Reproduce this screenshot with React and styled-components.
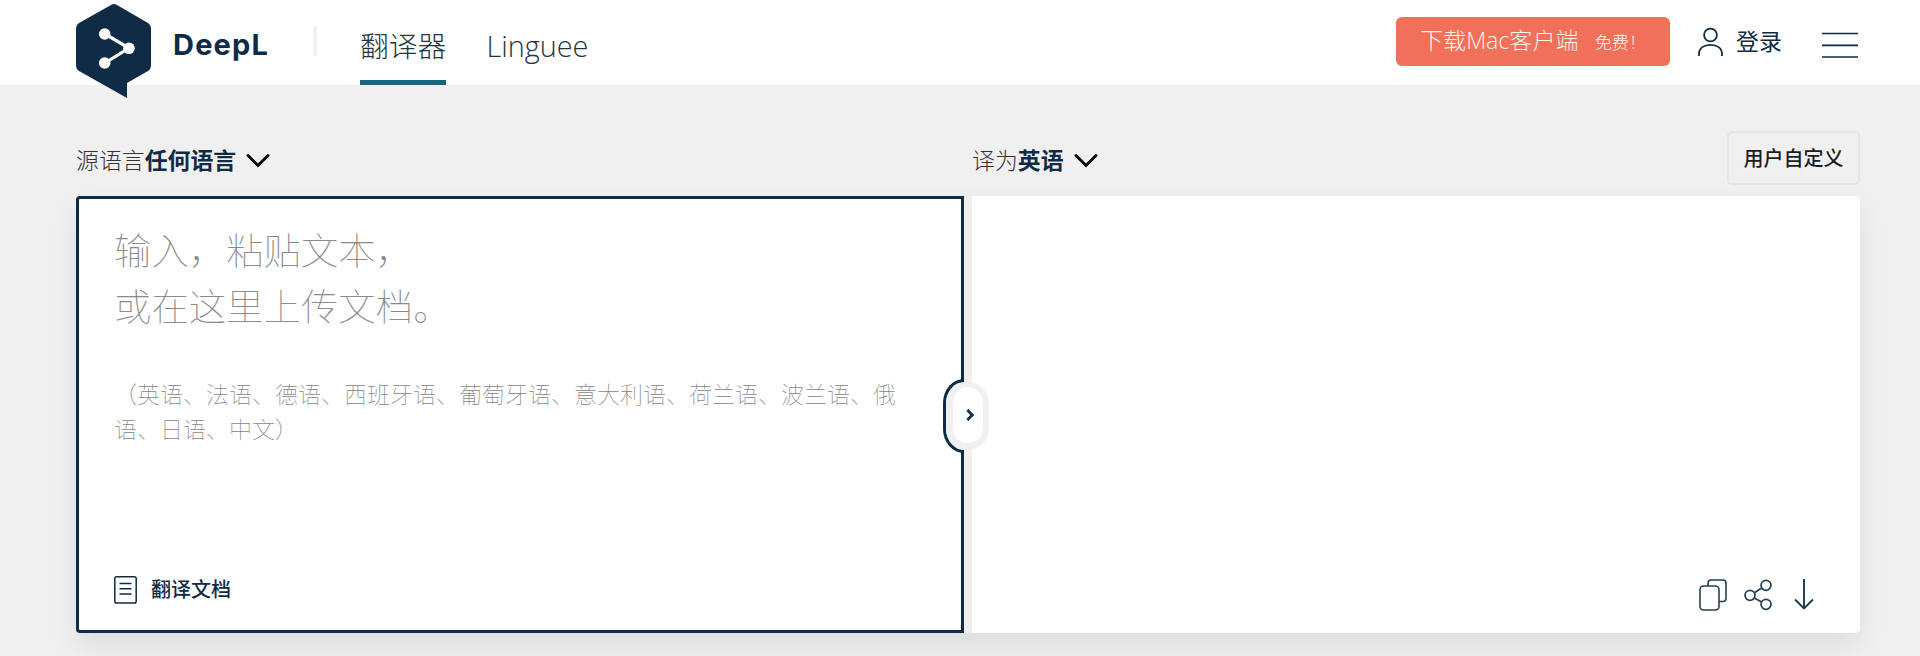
import React from "react";
import styled, { createGlobalStyle } from "styled-components";

const navy = "#0f2b46";
const cjk = '"Open Sans", "Noto Sans CJK SC", sans-serif';

const GlobalStyle = createGlobalStyle`
  * { box-sizing: border-box; }
  body { margin: 0; background: #f0f0f0; font-family: ${cjk}; color: ${navy}; }
  button { font: inherit; color: inherit; background: none; border: 0; padding: 0; }
  svg { display: block; flex: none; }
`;

const Page = styled.div`
  height: 656px;
  overflow: hidden;
  background: #f0f0f0;
`;

const Header = styled.header`
  display: flex;
  height: 85px;
  padding: 0 62px 0 76px;
  background: #fff;
`;

const Brand = styled.a`
  display: flex;
  align-items: flex-start;
  width: 237px;
`;

const Wordmark = styled.span`
  margin: 27px 0 0 21px;
  font: 650 29px/36px Inter, sans-serif;
  letter-spacing: 1.2px;
`;

const Divider = styled.span`
  width: 4px;
  height: 29px;
  margin-top: 27px;
  background: #f2f2f2;
`;

const Nav = styled.nav`
  display: flex;
  gap: 40px;
  margin-left: 43px;
`;

const NavItem = styled.a`
  height: 85px;
  padding-top: 1px;
  border-bottom: 5px solid ${(p) => (p.$active ? "#1b6480" : "transparent")};
  font-size: 28.8px;
  font-weight: 300;
  line-height: 90px;
  color: #24363d;
`;

const Actions = styled.div`
  display: flex;
  align-items: flex-start;
  margin-left: auto;
`;

const Download = styled.button`
  display: flex;
  align-items: baseline;
  gap: 16px;
  width: 274px;
  height: 49px;
  margin: 17px 27px 0 0;
  padding: 0 0 0 24px;
  border-radius: 6px;
  background: #f1705a;
  color: #fff3ed;
  font-size: 23.1px;
  font-weight: 300;
  line-height: 47px;
  white-space: nowrap;
`;

const Free = styled.span`
  font-size: 17.2px;
`;

const Login = styled.a`
  display: flex;
  align-items: center;
  gap: 12px;
  height: 85px;
  width: 125px;
  padding-bottom: 2px;
  font-size: 22.9px;
  line-height: 30px;
`;

const Main = styled.main`
  padding: 46px 60px 0 76px;
`;

const LanguageBar = styled.div`
  display: flex;
  height: 65px;
`;

const Language = styled.button`
  display: flex;
  align-items: center;
  width: ${(p) => p.$width}px;
  height: 56px;
  font-size: 22.9px;
  font-weight: 300;
  color: #333;
  b { font-weight: 700; color: ${navy}; margin-right: 10px; }
  svg { margin-top: 3px; }
`;

const Custom = styled.button`
  width: 133px;
  height: 54px;
  margin-left: auto;
  border: 2px solid #e6e6e6;
  border-radius: 5px;
  padding-bottom: 1px;
  font-size: 20px;
  font-weight: 500;
  color: #1c1c1e;
`;

const Panels = styled.div`
  position: relative;
  display: flex;
  gap: 8px;
  height: 437px;
  border-radius: 5px;
  box-shadow: 0 14px 28px rgba(0, 0, 0, 0.075);
`;

const Source = styled.section`
  display: flex;
  flex-direction: column;
  flex: 0 0 888px;
  padding: 22px 50px 26px 35px;
  border: 3px solid ${navy};
  border-radius: 4px 0 0 4px;
  background: #fff;
`;

const Prompt = styled.p`
  margin: 0;
  font-size: 37.4px;
  font-weight: 100;
  line-height: 56px;
  color: #8a8a8a;
  font-family: "Noto Sans CJK SC", sans-serif;
`;

const Languages = styled.p`
  width: 784px;
  margin: 43px 0 0;
  font: 100 23px/34.5px "Noto Sans CJK SC", sans-serif;
  color: #858585;
`;

const DocumentLink = styled.a`
  display: flex;
  align-items: center;
  gap: 14px;
  margin-top: auto;
  font-size: 20px;
  font-weight: 500;
  line-height: 28px;
`;

const Target = styled.section`
  display: flex;
  flex: 1;
  align-items: flex-end;
  justify-content: flex-end;
  padding: 0 46px 22px 0;
  border-radius: 0 5px 5px 0;
  background: #fff;
`;

const Tool = styled.button`
  margin-left: ${(p) => p.$space}px;
`;

const SwapEdge = styled.span`
  position: absolute;
  left: 867px;
  top: 183px;
  width: 21px;
  height: 74px;
  border: 3px solid ${navy};
  border-right: 0;
  border-radius: 21px 0 0 21px / 24px 0 0 24px;
  background: #f0f0f0;
`;

const Swap = styled.button`
  position: absolute;
  left: 870px;
  top: 186px;
  display: flex;
  align-items: center;
  justify-content: center;
  width: 43px;
  height: 68px;
  padding: 0 0 1px 4px;
  border: 6px solid #f0f0f0;
  border-width: 5px 6px 7px 7px;
  border-radius: 22px;
  background: #fff;
`;

const Logo = () => (
  <svg width="76" height="100" viewBox="0 0 76 100">
    <path
      fill={navy}
      d="M35 5Q38 3 41 5L72 23Q75 25 75 28V66Q75 69 72 71L51 83V98L3 71Q0 69 0 66V28Q0 25 3 23Z"
    />
    <path d="M29 34L53 48L29 63" fill="none" stroke="#fff" strokeWidth="3.2" />
    <g fill="#fff">
      <circle cx="28.7" cy="34" r="5.8" />
      <circle cx="53" cy="48.3" r="5.8" />
      <circle cx="28.7" cy="63" r="5.8" />
    </g>
  </svg>
);

const Chevron = () => (
  <svg width="24" height="16" viewBox="0 0 24 16">
    <path d="M2 2.5L12 12.5L22 2.5" fill="none" stroke="#080808" strokeWidth="3" strokeLinecap="round" />
  </svg>
);

const UserIcon = () => (
  <svg width="27" height="30" viewBox="0 0 27 30" fill="none" stroke={navy} strokeWidth="1.8">
    <circle cx="13.5" cy="8" r="6.4" />
    <path d="M2 29V27C2 21 7 17.8 13.5 17.8S25 21 25 27V29" />
  </svg>
);

const MenuIcon = () => (
  <svg width="36" height="85" viewBox="0 0 36 85" stroke={navy} strokeWidth="1.7">
    <path d="M0 33.5H36M0 45.3H36M0 57H36" />
  </svg>
);

const DocumentIcon = () => (
  <svg width="23" height="28" viewBox="0 0 23 28" fill="none" stroke={navy}>
    <rect x=".8" y=".8" width="21.4" height="26.2" rx="1.8" strokeWidth="1.5" />
    <path d="M5.5 7.5H17.5M5.5 12.8H17.5M5.5 18H17.5" strokeWidth="1.5" />
  </svg>
);

const CopyIcon = () => (
  <svg width="28" height="32" viewBox="0 0 28 32" fill="none" stroke="#25404f" strokeWidth="1.6">
    <path d="M9 7V4Q9 1 12 1H24Q27 1 27 4V19.5Q27 22.5 24 22.5H20" />
    <rect x="1" y="7" width="19" height="24" rx="3.5" />
  </svg>
);

const ShareIcon = () => (
  <svg width="28" height="32" viewBox="0 0 28 32" fill="none" stroke="#25404f" strokeWidth="1.7">
    <circle cx="6" cy="16.3" r="5" />
    <circle cx="22" cy="6.3" r="5" />
    <circle cx="22" cy="25.3" r="5" />
    <path d="M10.3 13.7L17.7 9M10.3 19L17.7 23" />
  </svg>
);

const DownIcon = () => (
  <svg width="20" height="32" viewBox="0 0 20 32" fill="none" stroke="#1d3b4f" strokeWidth="1.9">
    <path d="M10 0V29.5M1 20.5L10 29.5L19 20.5" />
  </svg>
);

const SwapArrow = () => (
  <svg width="8" height="12" viewBox="0 0 8 12">
    <path d="M1.3 1L6.3 6L1.3 11" fill="none" stroke={navy} strokeWidth="2.7" />
  </svg>
);

export default function App() {
  return (
    <Page>
      <GlobalStyle />
      <Header>
        <Brand>
          <Logo />
          <Wordmark>DeepL</Wordmark>
        </Brand>
        <Divider />
        <Nav>
          <NavItem $active>翻译器</NavItem>
          <NavItem>Linguee</NavItem>
        </Nav>
        <Actions>
          <Download>
            下载Mac客户端 <Free>免费！</Free>
          </Download>
          <Login>
            <UserIcon />
            登录
          </Login>
          <MenuIcon />
        </Actions>
      </Header>
      <Main>
        <LanguageBar>
          <Language $width={896}>
            源语言<b>任何语言</b>
            <Chevron />
          </Language>
          <Language $width={126}>
            译为<b>英语</b>
            <Chevron />
          </Language>
          <Custom>用户自定义</Custom>
        </LanguageBar>
        <Panels>
          <Source>
            <Prompt>
              输入，粘贴文本，
              <br />
              或在这里上传文档。
            </Prompt>
            <Languages>
              （英语、法语、德语、西班牙语、葡萄牙语、意大利语、荷兰语、波兰语、俄语、日语、中文）
            </Languages>
            <DocumentLink>
              <DocumentIcon />
              翻译文档
            </DocumentLink>
          </Source>
          <Target>
            <Tool $space={0}>
              <CopyIcon />
            </Tool>
            <Tool $space={17}>
              <ShareIcon />
            </Tool>
            <Tool $space={22}>
              <DownIcon />
            </Tool>
          </Target>
          <SwapEdge />
          <Swap>
            <SwapArrow />
          </Swap>
        </Panels>
      </Main>
    </Page>
  );
}
